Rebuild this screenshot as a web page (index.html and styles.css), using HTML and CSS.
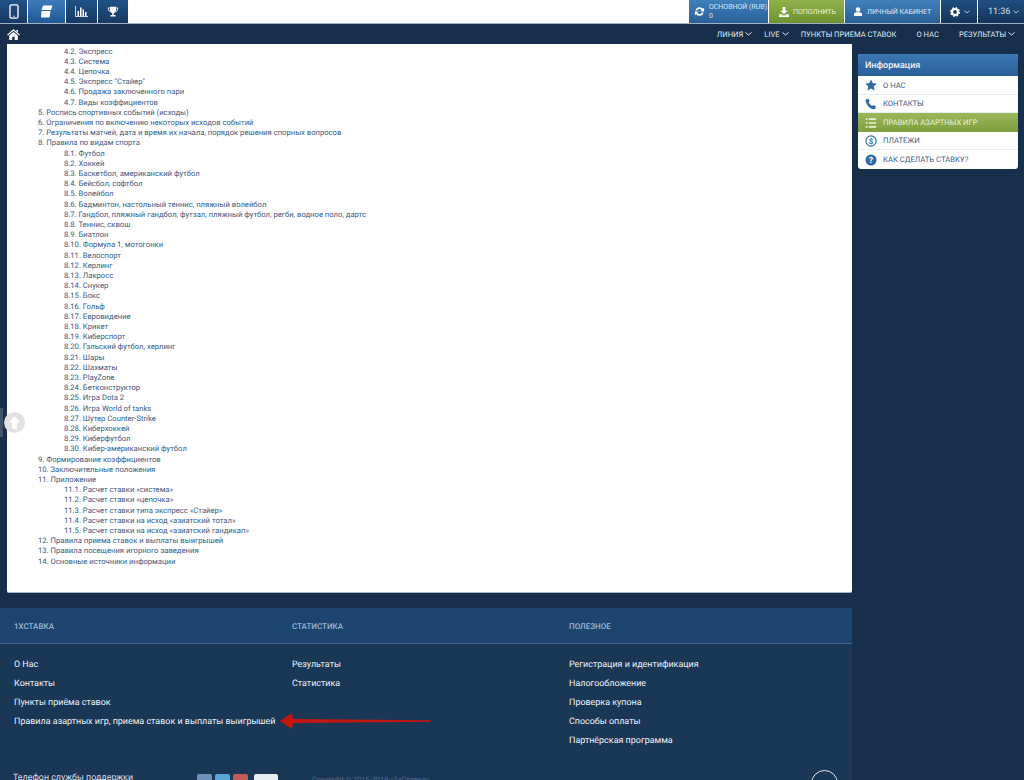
FILE: index.html
```html
<!DOCTYPE html>
<html lang="ru">
<head>
<meta charset="utf-8">
<title>Правила азартных игр</title>
<link rel="stylesheet" href="styles.css">
</head>
<body>
<header class="topbar">
  <nav class="tabs">
    <a class="tab"><svg width="10" height="15" viewBox="0 0 10 15"><rect x="1" y=".8" width="8" height="13.400" rx="1.500" fill="none" stroke="#fff" stroke-width="1.300"/><circle cx="5" cy="12.300" r=".7" fill="#fff"/></svg></a>
    <a class="tab tab-active"><svg width="13" height="13" viewBox="0 0 13 13"><path d="M3 .5h9.500L11 5H1.500zM1.500 6h9l-1 6.500H1z" fill="#fff"/></svg></a>
    <a class="tab"><svg width="13" height="11" viewBox="0 0 13 11"><path d="M.5 0v10.500h12.500" fill="none" stroke="#fff" stroke-width=".8"/><path d="M2.500 5H4v5H2.500zM5 1.500h1.500V10H5zM7.500 3.500H9V10H7.500zM10 6h1.500v4H10z" fill="#fff"/></svg></a>
    <a class="tab"><svg width="12" height="12" viewBox="0 0 16 16"><path d="M4 1h8v5a4 4 0 0 1-3 3.800V12h2.500v2h-7v-2H7V9.800A4 4 0 0 1 4 6zM1 2h2.500v1.200H2.200C2.300 5 3 6 4 6.500v1.200C2 7 1 5 1 2zM15 2h-2.500v1.200h1.300C13.700 5 13 6 12 6.500v1.200C14 7 15 5 15 2z" fill="#fff"/></svg></a>
  </nav>
  <div class="account">
    <div class="acc acc-blue acc-balance"><svg width="11" height="11" viewBox="0 0 12 12"><path d="M1.500 5A4.600 4.600 0 0 1 9.600 3L11 1.800V6H6.800l1.500-1.500A2.900 2.900 0 0 0 3.300 5zM10.500 7A4.600 4.600 0 0 1 2.400 9L1 10.200V6h4.200L3.700 7.500A2.900 2.900 0 0 0 8.700 7z" fill="#fff"/></svg><span class="bal"><span>ОСНОВНОЙ (RUB)</span><span>0</span></span></div>
    <div class="acc acc-green"><svg width="10" height="10" viewBox="0 0 11 11"><path d="M4 0h3v4h2.500L5.500 8 1.500 4H4zM0 8h2.500l3 1.500 3-1.500H11v3H0z" fill="#fff"/></svg><span>ПОПОЛНИТЬ</span></div>
    <div class="acc acc-blue acc-cab"><svg width="8" height="9" viewBox="0 0 10 11"><circle cx="5" cy="3" r="2.800" fill="#fff"/><path d="M0 11V8.500C0 7 2 6 5 6s5 1 5 2.500V11z" fill="#fff"/></svg><span>ЛИЧНЫЙ КАБИНЕТ</span></div>
    <div class="acc acc-dark acc-gear"><svg width="10" height="10" viewBox="0 0 11 11"><circle cx="5.500" cy="5.500" r="3.300" fill="none" stroke="#fff" stroke-width="2.400"/><circle cx="5.500" cy="5.500" r="4.800" fill="none" stroke="#fff" stroke-width="1.300" stroke-dasharray="1.900 1.870"/></svg><svg class="chev" width="6" height="4" viewBox="0 0 7 4"><path d="M.5.500l3 2.500 3-2.500" fill="none" stroke="#cdd9e6"/></svg></div>
    <div class="acc acc-dark acc-time"><span>11:36</span><svg class="chev" width="6" height="4" viewBox="0 0 7 4"><path d="M.5.500l3 2.500 3-2.500" fill="none" stroke="#cdd9e6"/></svg></div>
  </div>
</header>
<div class="navbar">
  <svg class="home" width="13" height="11" viewBox="0 0 14 12"><path d="M7 0l7 6.200-.8.900L7 1.800.8 7.100 0 6.200zM2.300 7.200L7 3.200l4.700 4V12H8.300V8.500H5.700V12H2.300zM10 1h1.800v2.800L10 2.300z" fill="#fff"/></svg>
  <nav class="menu">
    <a class="m1">ЛИНИЯ<svg class="chev" width="7" height="4" viewBox="0 0 7 4"><path d="M.5.500l3 2.500 3-2.500" fill="none" stroke="#dfe7f0"/></svg></a>
    <a class="m2">LIVE<svg class="chev" width="7" height="4" viewBox="0 0 7 4"><path d="M.5.500l3 2.500 3-2.500" fill="none" stroke="#dfe7f0"/></svg></a>
    <a class="m3">ПУНКТЫ ПРИЕМА СТАВОК</a>
    <a class="m4">О НАС</a>
    <a class="m5">РЕЗУЛЬТАТЫ<svg class="chev" width="7" height="4" viewBox="0 0 7 4"><path d="M.5.500l3 2.500 3-2.500" fill="none" stroke="#dfe7f0"/></svg></a>
  </nav>
</div>
<div class="page">
  <main class="main">
    <section class="doc">
      <p class="l2">4.2. Экспресс</p>
      <p class="l2">4.3. Система</p>
      <p class="l2">4.4. Цепочка</p>
      <p class="l2">4.5. Экспресс "Стайер"</p>
      <p class="l2">4.6. Продажа заключенного пари</p>
      <p class="l2">4.7. Виды коэффициентов</p>
      <p>5. Роспись спортивных событий (исходы)</p>
      <p>6. Ограничения по включению некоторых исходов событий</p>
      <p>7. Результаты матчей, дата и время их начала, порядок решения спорных вопросов</p>
      <p>8. Правила по видам спорта</p>
      <p class="l2">8.1. Футбол</p>
      <p class="l2">8.2. Хоккей</p>
      <p class="l2">8.3. Баскетбол, американский футбол</p>
      <p class="l2">8.4. Бейсбол, софтбол</p>
      <p class="l2">8.5. Волейбол</p>
      <p class="l2">8.6. Бадминтон, настольный теннис, пляжный волейбол</p>
      <p class="l2">8.7. Гандбол, пляжный гандбол, футзал, пляжный футбол, регби, водное поло, дартс</p>
      <p class="l2">8.8. Теннис, сквош</p>
      <p class="l2">8.9. Биатлон</p>
      <p class="l2">8.10. Формула 1, мотогонки</p>
      <p class="l2">8.11. Велоспорт</p>
      <p class="l2">8.12. Керлинг</p>
      <p class="l2">8.13. Лакросс</p>
      <p class="l2">8.14. Снукер</p>
      <p class="l2">8.15. Бокс</p>
      <p class="l2">8.16. Гольф</p>
      <p class="l2">8.17. Евровидение</p>
      <p class="l2">8.18. Крикет</p>
      <p class="l2">8.19. Киберспорт</p>
      <p class="l2">8.20. Гэльский футбол, херлинг</p>
      <p class="l2">8.21. Шары</p>
      <p class="l2">8.22. Шахматы</p>
      <p class="l2">8.23. PlayZone</p>
      <p class="l2">8.24. Бетконструктор</p>
      <p class="l2">8.25. Игра Dota 2</p>
      <p class="l2">8.26. Игра World of tanks</p>
      <p class="l2">8.27. Шутер Counter-Strike</p>
      <p class="l2">8.28. Киберхоккей</p>
      <p class="l2">8.29. Киберфутбол</p>
      <p class="l2">8.30. Кибер-американский футбол</p>
      <p>9. Формирование коэффициентов</p>
      <p>10. Заключительные положения</p>
      <p>11. Приложение</p>
      <p class="l2">11.1. Расчет ставки «система»</p>
      <p class="l2">11.2. Расчет ставки «цепочка»</p>
      <p class="l2">11.3. Расчет ставки типа экспресс «Стайер»</p>
      <p class="l2">11.4. Расчет ставки на исход «азиатский тотал»</p>
      <p class="l2">11.5. Расчет ставки на исход «азиатский гандикап»</p>
      <p>12. Правила приема ставок и выплаты выигрышей</p>
      <p>13. Правила посещения игорного заведения</p>
      <p>14. Основные источники информации</p>
    </section>
    <footer class="foot">
      <div class="foot-head">
        <span>1ХСТАВКА</span><span>СТАТИСТИКА</span><span>ПОЛЕЗНОЕ</span>
      </div>
      <div class="foot-cols">
        <ul>
          <li>О Нас</li>
          <li>Контакты</li>
          <li>Пункты приёма ставок</li>
          <li>Правила азартных игр, приема ставок и выплаты выигрышей</li>
        </ul>
        <ul>
          <li>Результаты</li>
          <li>Статистика</li>
        </ul>
        <ul>
          <li>Регистрация и идентификация</li>
          <li>Налогообложение</li>
          <li>Проверка купона</li>
          <li>Способы оплаты</li>
          <li>Партнёрская программа</li>
        </ul>
      </div>
      <div class="foot-bottom">
        <span class="phone">Телефон службы поддержки</span>
        <span class="social"><i class="s1"></i><i class="s2"></i><i class="s3"></i><i class="s4"></i></span>
        <span class="copy">Copyright © 2016-2019 «1хСтавка»</span>
        <span class="ring"></span>
      </div>
    </footer>
  </main>
  <aside class="side">
    <div class="side-card">
      <h3 class="side-title">Информация</h3>
      <a class="side-item"><svg width="12" height="12" viewBox="0 0 14 14"><path d="M7 .5l2 4.300 4.700.6-3.400 3.200.9 4.700L7 11l-4.200 2.300.9-4.700L.3 5.400 5 4.800z" fill="#2f6ca8"/></svg><span>О НАС</span></a>
      <a class="side-item"><svg width="12" height="12" viewBox="0 0 14 14"><path d="M1.500 1.500L4 .8l1.500 3-1.300 1.300c.8 1.800 2.300 3.300 4.300 4.300l1.300-1.300 3 1.500-.8 2.700c-.4.700-1.200 1-2 .9C5.500 12.500 1.500 8 .8 3.500c-.1-.8.200-1.500.7-2z" fill="#2f6ca8"/></svg><span>КОНТАКТЫ</span></a>
      <a class="side-item side-active"><svg width="12" height="12" viewBox="0 0 14 14"><path d="M1 1.500h2v2H1zM1 6h2v2H1zM1 10.500h2v2H1zM4.500 1.500H13v2H4.500zM4.500 6H13v2H4.500zM4.500 10.500H13v2H4.500z" fill="#e8efd8"/></svg><span>ПРАВИЛА АЗАРТНЫХ ИГР</span></a>
      <a class="side-item"><svg width="12" height="12" viewBox="0 0 14 14"><circle cx="7" cy="7" r="6" fill="none" stroke="#2f6ca8" stroke-width="1.300"/><text class="dollar" x="7" y="10.200" text-anchor="middle">$</text></svg><span>ПЛАТЕЖИ</span></a>
      <a class="side-item"><svg width="12" height="12" viewBox="0 0 14 14"><circle cx="7" cy="7" r="6.500" fill="#2f6ca8"/><text class="qmark" x="7" y="10.500" text-anchor="middle">?</text></svg><span>КАК СДЕЛАТЬ СТАВКУ?</span></a>
    </div>
  </aside>
</div>
<div class="up"><svg width="13" height="15" viewBox="0 0 16 18"><path d="M8 1l7 8h-4v8H5V9H1z" fill="#fff"/></svg></div>
<svg class="arrow" width="152" height="20" viewBox="0 0 152 20"><path d="M0 10L12 2l1 6 138 1.300v1.400L13 12l-1 6z" fill="#c2170f"/></svg>
</body>
</html>
```
FILE: styles.css
```css
* { box-sizing: border-box; }
html, body { margin: 0; padding: 0; }
body {
  width: 1024px;
  height: 780px;
  overflow: hidden;
  position: relative;
  background: #182f4c;
  font-family: Roboto, "Liberation Sans", sans-serif;
  text-rendering: geometricPrecision;
  color: #fff;
}
svg { display: block; flex: none; }
a { color: inherit; text-decoration: none; }

.topbar { height: 23px; background: #fff; display: flex; justify-content: space-between; }
.tabs { display: flex; gap: 1px; }
.tab {
  width: 27px;
  display: flex; align-items: center; justify-content: center;
  background: linear-gradient(#1f5288, #183a62);
}
.tab-active { width: 37px; background: linear-gradient(#3d7ab8, #1f5a96); }
.tab:nth-child(3) { width: 31px; }
.tab:nth-child(4) { width: 30px; }

.account { display: flex; gap: 1px; }
.acc { height: 23px; display: flex; align-items: center; font-size: 7px; }
.acc-blue { background: linear-gradient(#3f80bd, #2a6098); }
.acc-green { background: linear-gradient(#8fb14a, #6d9330); width: 75px; padding-left: 10px; gap: 4px; color: #e8efd8; }
.acc-dark { background: linear-gradient(#1f4e80, #17355a); }
.acc-balance { width: 79px; padding-left: 5px; gap: 4px; }
.bal { display: flex; flex-direction: column; line-height: 9px; font-size: 7px; color: #d8e5f2; }
.acc-cab { width: 95px; padding-left: 9px; gap: 5px; color: #dde8f3; }
.acc-gear { width: 36px; padding-left: 9px; gap: 4px; }
.acc-time { width: 46px; padding-left: 10px; gap: 3px; font-size: 9px; color: #d4e0ec; }

.navbar {
  height: 21px;
  border-top: 1px solid #9fb0c2;
  background: #182f4c;
  display: flex; align-items: center; justify-content: space-between;
  padding-left: 7px;
}
.menu { display: flex; font-size: 7.600px; color: #dfe7f0; }
.menu a { display: flex; align-items: center; gap: 2px; }
.m1 { margin-right: 12px; }
.m2 { margin-right: 12px; }
.m3 { margin-right: 20px; }
.m4 { margin-right: 20px; }
.m5 { margin-right: 9px; }

.page { display: flex; align-items: flex-start; }
.main { width: 852px; }
.doc {
  margin-left: 7px;
  height: 549px;
  background: #fff;
  border-bottom: 1px solid #a8b8c8;
  border-radius: 0 0 2px 2px;
  padding: 2.500px 0 0 31px;
  color: #385a82;
  font-size: 7.660px;
  line-height: 10.210px;
}
.doc p { margin: 0; white-space: nowrap; }
.doc .l2 { padding-left: 26px; }

.foot { margin-top: 15px; background: #1b3756; height: 172px; overflow: hidden; }
.foot-head {
  height: 36px;
  display: grid; grid-template-columns: 278px 277px 1fr;
  align-items: center;
  padding: 1px 0 0 14px;
  background: #1e4570;
  border-bottom: 1px solid #3f6690;
  font-size: 8px;
  font-weight: 500;
  color: #9db8d4;
}
.foot-cols {
  display: grid; grid-template-columns: 278px 277px 1fr;
  padding: 11.500px 0 0 14px;
  height: 129px;
}
.foot-cols ul { margin: 0; padding: 0; list-style: none; }
.foot-cols li { height: 19.200px; line-height: 19.200px; font-size: 8.950px; color: #eef2f6; white-space: nowrap; }

.foot-bottom { position: relative; height: 20px; }
.phone { position: absolute; left: 13px; top: 0; font-size: 8.900px; line-height: 10px; color: #d5dee8; white-space: nowrap; }
.social { position: absolute; left: 197px; top: 1px; display: flex; gap: 3px; }
.social i { display: block; width: 15px; height: 15px; border-radius: 2px; }
.s1 { background: #6e93bb; }
.s2 { background: #5aa6d6; }
.s3 { background: #c45a5a; }
.social .s4 { width: 24px; margin-left: 3px; background: #e8edf2; }
.copy { position: absolute; left: 312px; top: 2px; font-size: 7.400px; color: #51688a; white-space: nowrap; }
.ring { position: absolute; left: 811px; top: -3px; width: 27px; height: 27px; border: 1px solid #dfe7ef; border-radius: 50%; }

.side { width: 172px; padding: 10px 6px 0; }
.side-card { background: #fff; border-radius: 3px; overflow: hidden; }
.side-title {
  margin: 0; height: 22px;
  display: flex; align-items: center;
  padding: 1px 0 0 7px;
  background: linear-gradient(#3b78b6, #2a5f98);
  font-size: 9px; font-weight: 500;
  color: #eef4fa;
}
.side-item {
  height: 18.500px;
  display: flex; align-items: center; gap: 6px;
  padding: .5px 0 0 7px;
  font-size: 7.650px;
  color: #3d5d82;
  border-bottom: 1px solid #e8edf2;
}
.side-item:last-child { border-bottom: 0; }
.side-active { background: linear-gradient(#9ab85a, #7fa03e); color: #e8efd8; border-bottom: 0; }
.dollar { font: bold 9px Roboto, sans-serif; fill: #2f6ca8; }
.qmark { font: bold 10px Roboto, sans-serif; fill: #fff; }

.up {
  position: absolute; left: 4px; top: 412px;
  width: 21px; height: 21px;
  border-radius: 50%;
  background: #e2e2e2;
  display: flex; align-items: center; justify-content: center;
}
.up::before {
  content: "";
  position: absolute; left: -4px; top: -4px;
  width: 3px; height: 29px;
  background: rgba(255, 255, 255, .18);
}
.arrow { position: absolute; left: 280px; top: 711px; }
```
